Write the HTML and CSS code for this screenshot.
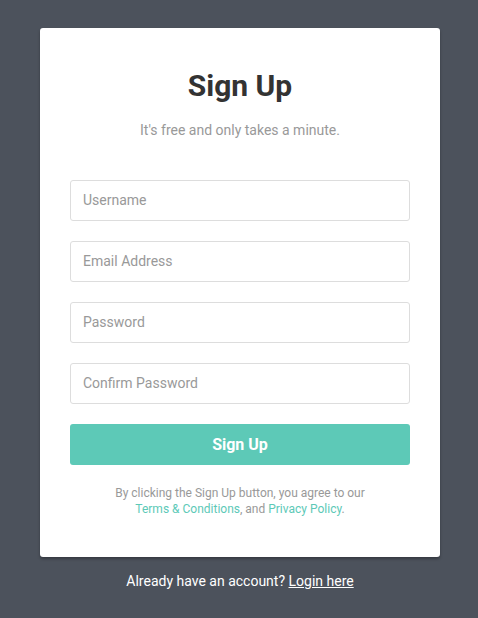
FILE: index.html
```html
<!DOCTYPE html>
<html lang="en">
  <head>
    <meta charset="UTF-8" />
    <meta name="viewport" content="width=device-width, initial-scale=1.0" />
    <title>Sign Up</title>
    <link rel="stylesheet" href="styles.css">
  </head>
  <body>
    <div class="signup">
      <form class="signup-card">
        <h2 class="title">Sign Up</h2>
        <p class="hint">It's free and only takes a minute.</p>

        <div class="fields">
          <input class="field" type="text" placeholder="Username" />
          <input class="field" type="email" placeholder="Email Address" />
          <input class="field" type="password" placeholder="Password" />
          <input class="field" type="password" placeholder="Confirm Password" />
          <button class="submit-btn" type="submit">Sign Up</button>
        </div>

        <p class="terms">
          By clicking the Sign Up button, you agree to our<br />
          <a href="#">Terms &amp; Conditions</a>, and <a href="#">Privacy Policy</a>.
        </p>
      </form>

      <p class="login">Already have an account? <a href="#">Login here</a></p>
    </div>
  </body>
</html>
```

FILE: styles.css
```css
* {
  margin: 0;
  padding: 0;
  box-sizing: border-box;
}

body {
  font-family: Roboto, "Liberation Sans", Arial, sans-serif;
  background-color: #4c525c;
  min-height: 100vh;
  padding-left: 2px;
}

.signup {
  width: 400px;
  margin: 0 auto;
  padding-top: 28px;
}

.signup-card {
  background-color: #fff;
  border-radius: 3px;
  box-shadow: 0 2px 3px rgba(0, 0, 0, 0.3);
  padding: 40px 30px;
  display: flex;
  flex-direction: column;
  align-items: center;
}

.title {
  font-size: 30px;
  line-height: 36px;
  font-weight: 700;
  color: #333;
}

.hint {
  margin-top: 16px;
  font-size: 14px;
  line-height: 20px;
  color: #999;
}

.fields {
  width: 100%;
  margin-top: 40px;
  display: flex;
  flex-direction: column;
  gap: 20px;
}

.field {
  height: 41px;
  width: 100%;
  border: 1px solid #ddd;
  border-radius: 3px;
  padding: 0 12px 1px;
  font-family: inherit;
  font-size: 14px;
  color: #333;
  outline: none;
}

.field::placeholder {
  color: #999;
}

.submit-btn {
  height: 41px;
  width: 100%;
  border: none;
  border-radius: 3px;
  background-color: #5dc9b7;
  color: #fff;
  font-family: inherit;
  font-size: 16px;
  font-weight: 700;
  cursor: pointer;
}

.terms {
  margin-top: 20px;
  font-size: 12px;
  line-height: 16px;
  color: #999;
  text-align: center;
}

.terms a {
  color: #5dc9b7;
  text-decoration: none;
}

.login {
  margin-top: 14px;
  font-size: 14px;
  line-height: 20px;
  color: #fff;
  text-align: center;
}

.login a {
  color: #fff;
  text-decoration: underline;
}
```
